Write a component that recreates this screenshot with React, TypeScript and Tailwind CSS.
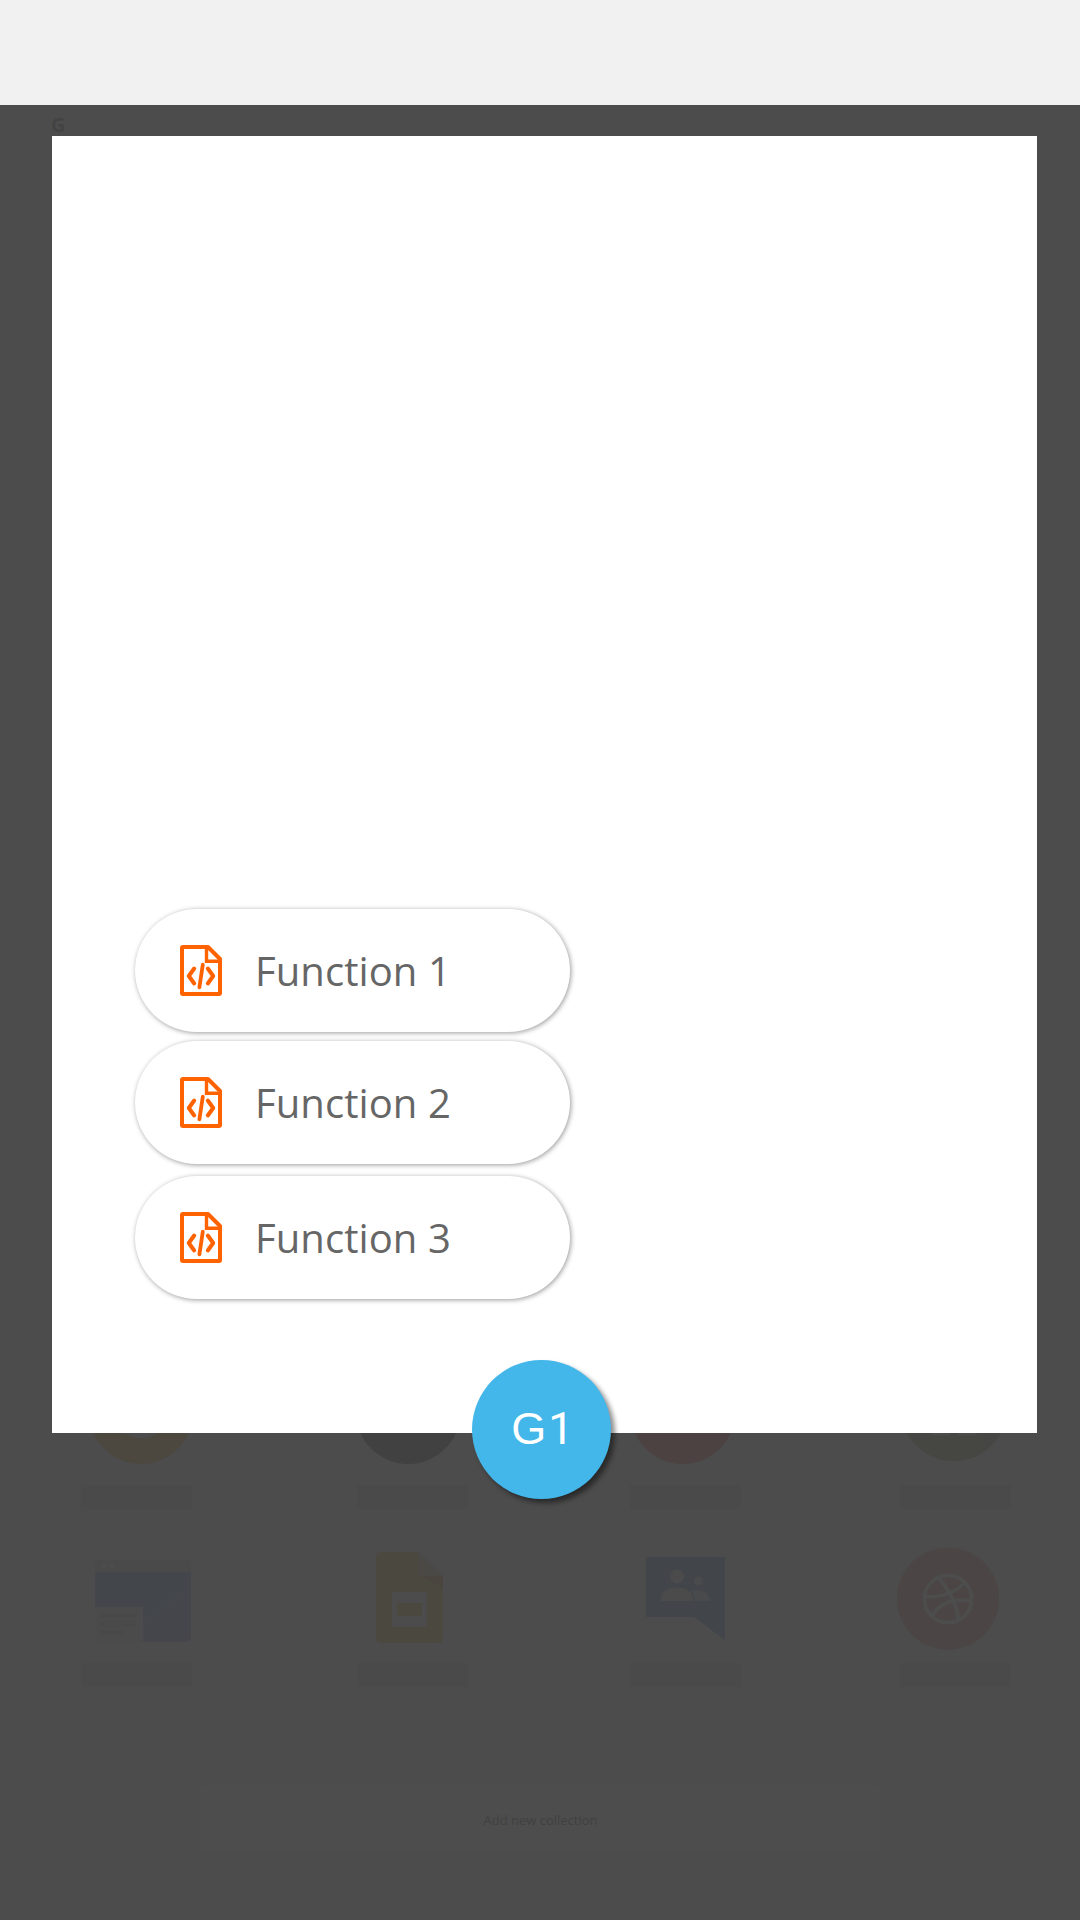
import type { ReactNode } from "react";

const functions = [
  { label: "Function 1", spacing: "" },
  { label: "Function 2", spacing: "mt-[9px]" },
  { label: "Function 3", spacing: "mt-3" },
];

function CodeFileIcon() {
  return (
    <svg width="42" height="51" viewBox="0 0 42 51" fill="none" stroke="#ff6200" className="shrink-0">
      <path d="M3 2H28L40 14V48Q40 49 39 49H3Q2 49 2 48V3Q2 2 3 2Z" strokeWidth="4" strokeLinejoin="round" />
      <path d="M26.500 2V16.300H40" strokeWidth="3.400" />
      <path d="M14.200 23.500L8.800 31L14.200 38.500M27.800 23.500L33.200 31L27.800 38.500" strokeWidth="4" strokeLinecap="round" strokeLinejoin="round" />
      <path d="M22.800 19.700L19.400 42.300" strokeWidth="3.800" strokeLinecap="round" />
    </svg>
  );
}

function Tile({ spacing, box, height, children }: { spacing: string; box: string; height: number; children: ReactNode }) {
  return (
    <div className={`w-[111px] shrink-0 ${spacing}`}>
      <svg width="111" height={height} viewBox={box} className="block overflow-visible">
        {children}
      </svg>
      <div className="h-6 bg-[#4a4a4a]" />
    </div>
  );
}

function Backdrop() {
  return (
    <div className="flex h-[1815px] flex-col bg-[#4c4c4c]">
      <div className="h-[1250px] pl-[51px] pt-[6px]">
        <span className="block font-['Open_Sans'] text-[20px] font-bold leading-[28px] text-[#434343]">G</span>
      </div>
      <div className="flex">
        <Tile spacing="ml-[81px]" box="81 1355 111 130" height={130}>
          <circle cx="141" cy="1411.5" r="52.5" fill="#4c4840" />
          <circle cx="141" cy="1411.5" r="27" fill="#4c4c4c" />
        </Tile>
        <Tile spacing="ml-[165px]" box="357 1355 111 130" height={130}>
          <circle cx="408.2" cy="1411.5" r="52.5" fill="#414141" />
        </Tile>
        <Tile spacing="ml-[162px]" box="630 1355 111 130" height={130}>
          <circle cx="682.7" cy="1411.5" r="52.5" fill="#4c4241" />
        </Tile>
        <Tile spacing="ml-[159px]" box="900 1355 111 130" height={130}>
          <circle cx="954" cy="1408" r="53" fill="#464642" />
          <path d="M932 1420h18v15.5h-18zM958.500 1420h18v15.500h-18z" fill="#4c4c4c" />
        </Tile>
      </div>
      <div className="flex">
        <Tile spacing="ml-[81px]" box="81 1509 111 154" height={154}>
          <defs>
            <linearGradient id="site" x1="0" y1="0" x2="1" y2="1">
              <stop offset=".45" stopColor="#43474c" />
              <stop offset="1" stopColor="#46464c" />
            </linearGradient>
          </defs>
          <path d="M95 1572V1565Q95 1560 100 1560H186Q191 1560 191 1565V1572Z" fill="#4a4a4a" />
          <path d="M95 1572H191V1637Q191 1642 186 1642H95Z" fill="url(#site)" />
          <path d="M95 1607H143V1642H95Z" fill="#4b4b4b" />
          <path d="M100 1615.500H137M100 1624H136M100 1632.500H123" stroke="#494949" strokeWidth="5" />
          <circle cx="104" cy="1565.500" r="2.500" fill="#4d4d4d" />
          <circle cx="112" cy="1565.500" r="2.500" fill="#4d4d4d" />
        </Tile>
        <Tile spacing="ml-[165px]" box="357 1509 111 154" height={154}>
          <path d="M381 1552H418L443 1576V1638Q443 1643 438 1643H381Q376 1643 376 1638V1557Q376 1552 381 1552Z" fill="#4b4840" />
          <path d="M418 1552L443 1576H421Q418 1576 418 1573Z" fill="#4b4945" />
          <path d="M420 1576H443V1587Z" fill="#4a453f" />
          <rect x="392" y="1592" width="35" height="35" rx="2" fill="#4c4c4c" />
          <rect x="397" y="1603" width="25" height="13" fill="#4b4840" />
        </Tile>
        <Tile spacing="ml-[162px]" box="630 1509 111 154" height={154}>
          <path d="M646 1557H725V1640L694 1617H646Z" fill="#42464b" />
          <g fill="#4b4b4b">
            <circle cx="677" cy="1576.500" r="7" />
            <path d="M661 1601V1598C663 1584 691 1584 693 1598V1601Z" />
          </g>
          <g fill="#484a4c">
            <circle cx="698.500" cy="1581" r="4.500" />
            <path d="M695 1601Q695 1594 691 1591C698 1588 710 1591 710 1601Z" />
          </g>
        </Tile>
        <Tile spacing="ml-[159px]" box="900 1509 111 154" height={154}>
          <circle cx="948" cy="1598.700" r="51" fill="#4b4546" />
          <g fill="none" stroke="#4d4d4d" strokeWidth="3.600">
            <circle cx="948" cy="1599" r="23.600" />
            <path d="M938.500 1577.500C949 1590 957 1606 958.500 1620M924.500 1597C942 1597 957 1592 965 1582M932 1616C940 1603 953 1598 971.500 1601" />
          </g>
        </Tile>
      </div>
      <div className="mx-auto mt-[98px] flex h-[68px] w-[682px] items-center justify-center rounded-md bg-[#4d4d4d] pl-px pt-px">
        <span className="whitespace-nowrap font-['Open_Sans'] text-[13px] leading-5 text-[#414141]">Add new collection</span>
      </div>
    </div>
  );
}

export default function App() {
  return (
    <main className="relative h-[1920px] w-[1080px] overflow-hidden font-['Open_Sans',sans-serif]">
      <header className="h-[105px] bg-[#f1f1f1]" />
      <Backdrop />
      <section className="absolute left-[52px] top-[136px] flex h-[1297px] w-[985px] flex-col bg-white pl-[83px] pt-[773px]">
        {functions.map(({ label, spacing }) => (
          <button
            key={label}
            className={`flex h-[123px] w-[435px] shrink-0 items-center rounded-full bg-white pl-[45px] text-left shadow-[1px_1px_5px_rgba(0,0,0,0.4)] ${spacing}`}
          >
            <CodeFileIcon />
            <span className="ml-[33px] whitespace-nowrap text-[40px] leading-[54px] tracking-[0.08px] text-[#666666]">{label}</span>
          </button>
        ))}
      </section>
      <button className="absolute left-[472px] top-[1360px] flex h-[139px] w-[139px] items-center justify-center rounded-full bg-[#43b6ea] pb-[2px] font-['Liberation_Sans'] text-[45px] leading-none text-white shadow-[4px_4px_5px_rgba(0,0,0,0.45)]">
        G<span className="-mr-[2px] ml-[2px] font-['Roboto']">1</span>
      </button>
    </main>
  );
}
